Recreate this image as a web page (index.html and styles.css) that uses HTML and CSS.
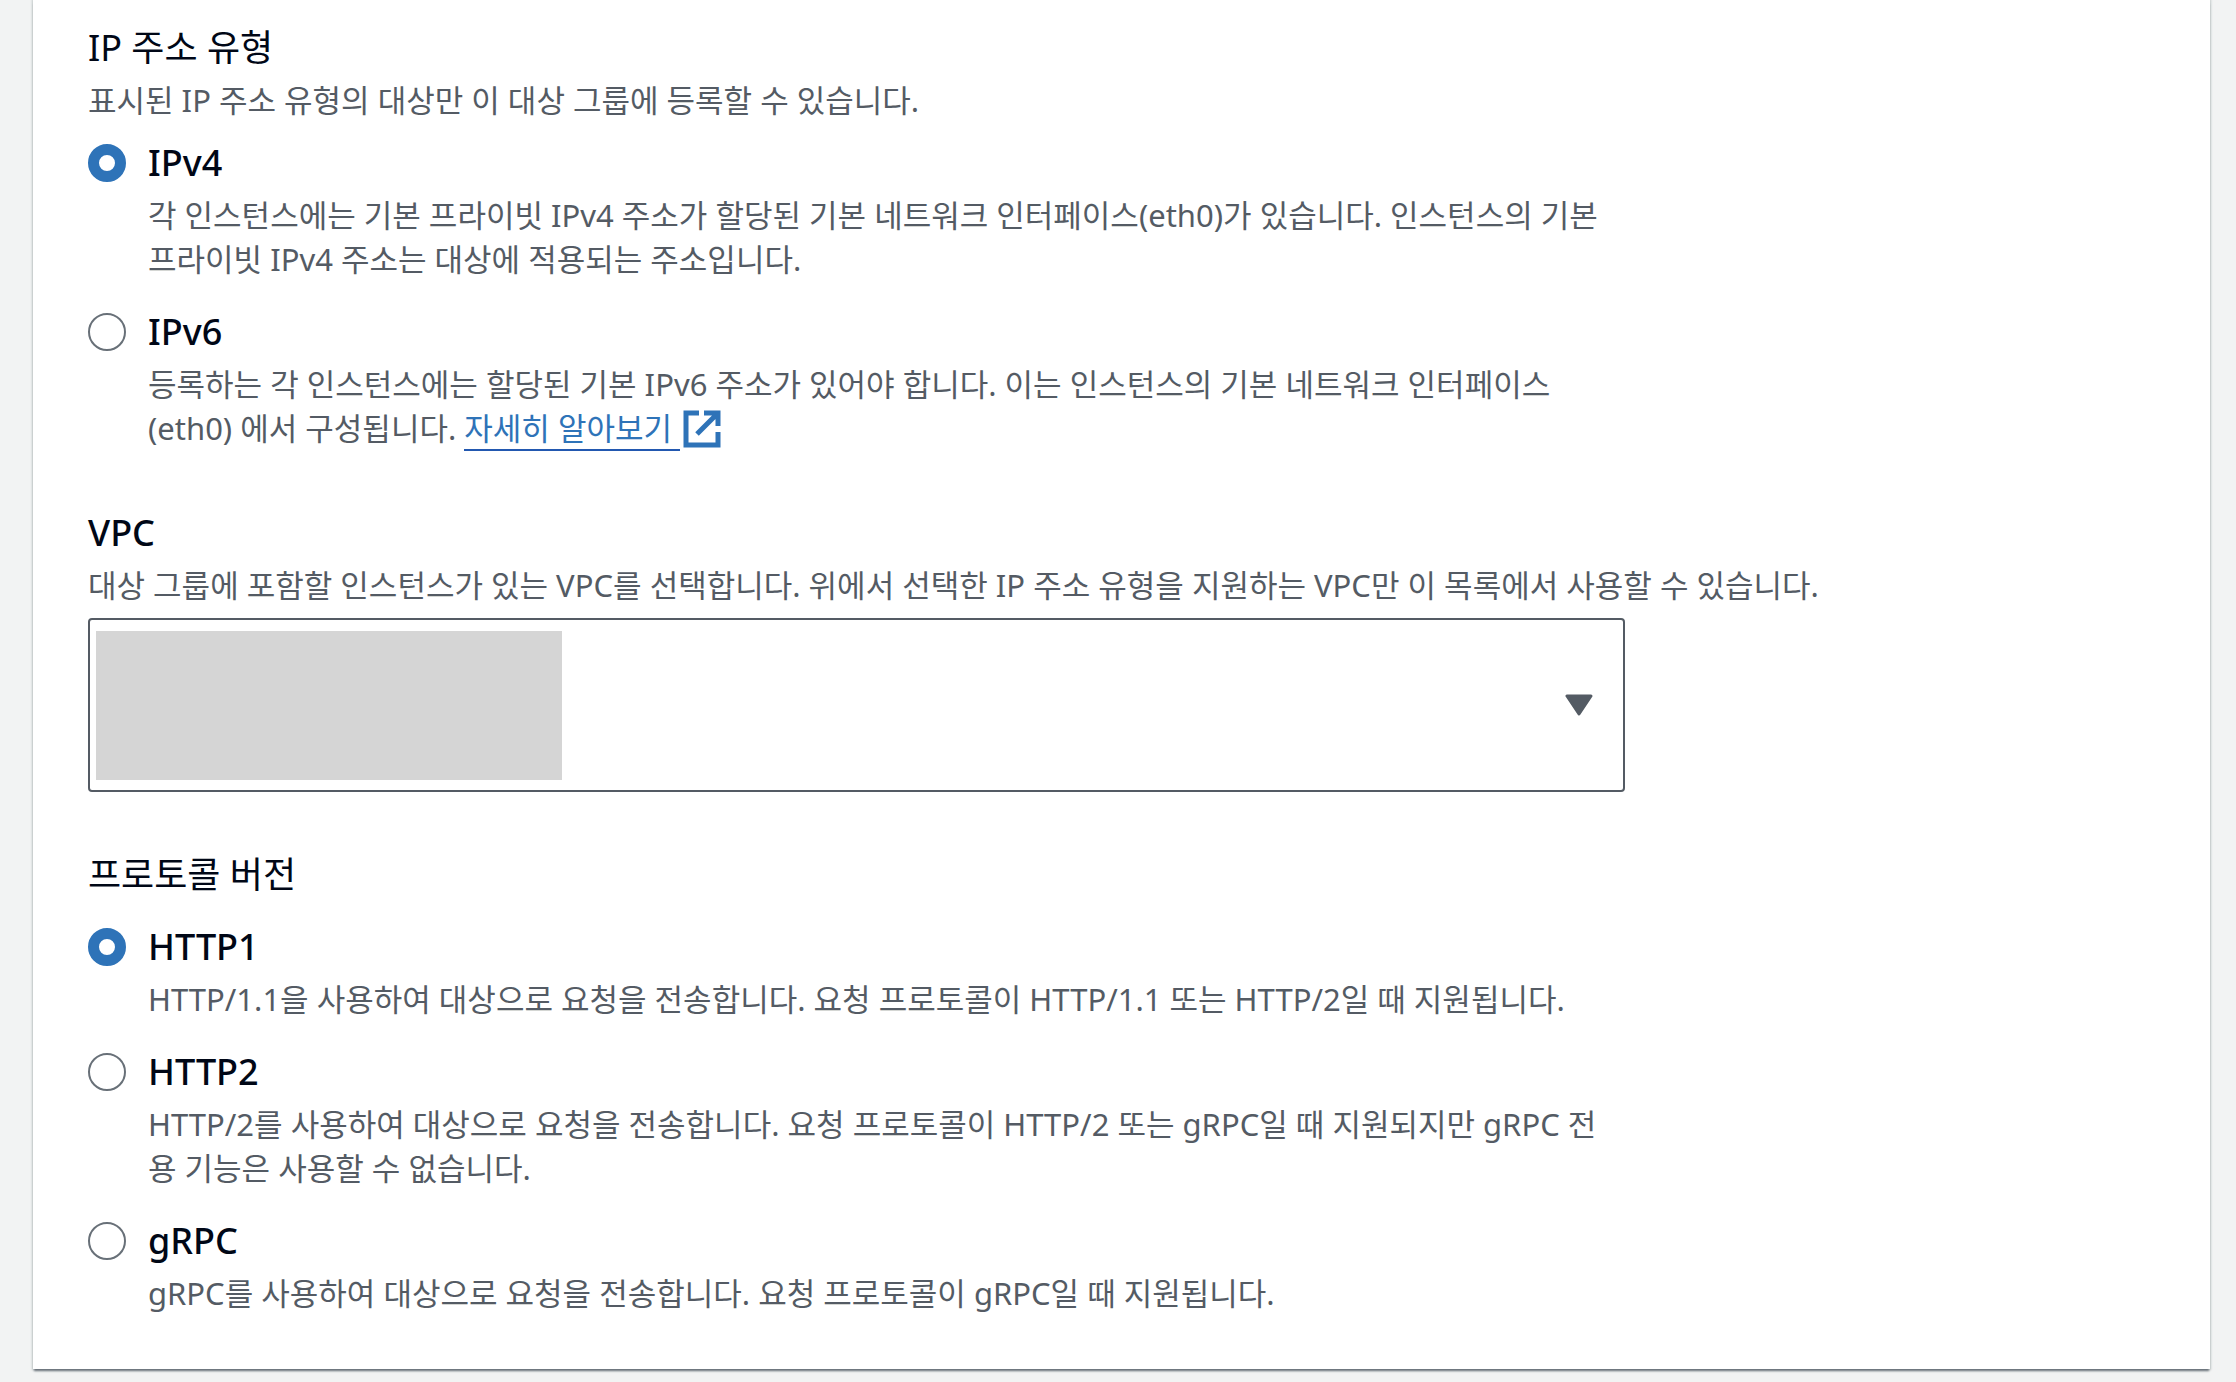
FILE: index.html
```html
<!DOCTYPE html>
<html lang="ko">
  <head>
    <meta charset="UTF-8" />
    <meta name="viewport" content="width=device-width, initial-scale=1.0" />
    <title>대상 그룹 생성</title>
    <link rel="stylesheet" href="styles.css">
  </head>
  <body>
    <form class="panel">
      <fieldset class="field" aria-describedby="ipTypeHint">
        <legend>IP 주소 유형</legend>
        <p class="description" id="ipTypeHint">표시된 IP 주소 유형의 대상만 이 대상 그룹에 등록할 수 있습니다.</p>
        <div class="options">
          <div class="option">
            <input type="radio" name="ipType" id="ipv4" checked />
            <div>
              <label for="ipv4">IPv4</label>
              <p class="description">
                각 인스턴스에는 기본 프라이빗 IPv4 주소가 할당된 기본 네트워크 인터페이스(eth0)가 있습니다. 인스턴스의 기본<br />
                프라이빗 IPv4 주소는 대상에 적용되는 주소입니다.
              </p>
            </div>
          </div>
          <div class="option">
            <input type="radio" name="ipType" id="ipv6" />
            <div>
              <label for="ipv6">IPv6</label>
              <p class="description">
                등록하는 각 인스턴스에는 할당된 기본 IPv6 주소가 있어야 합니다. 이는 인스턴스의 기본 네트워크 인터페이스<br />
                (eth0) 에서 구성됩니다.
                <a href="#"><span class="link-text">자세히 알아보기&nbsp;</span><svg class="external" viewBox="0 0 38 38" aria-hidden="true">
                    <path d="M16 3H3V35H35V22M21 3H35V16M34 4L14 24" />
                  </svg></a>
              </p>
            </div>
          </div>
        </div>
      </fieldset>

      <div class="field">
        <label for="vpc">VPC</label>
        <p class="description">대상 그룹에 포함할 인스턴스가 있는 VPC를 선택합니다. 위에서 선택한 IP 주소 유형을 지원하는 VPC만 이 목록에서 사용할 수 있습니다.</p>
        <div class="select">
          <select id="vpc">
            <option value=""></option>
          </select>
          <span class="mask"></span>
          <svg class="caret" viewBox="0 0 28 22" aria-hidden="true">
            <path d="M2 2H26L14 20Z" />
          </svg>
        </div>
      </div>

      <fieldset class="field protocol">
        <legend>프로토콜 버전</legend>
        <div class="options">
          <div class="option">
            <input type="radio" name="protocol" id="http1" checked />
            <div>
              <label for="http1">HTTP1</label>
              <p class="description">HTTP/1.1을 사용하여 대상으로 요청을 전송합니다. 요청 프로토콜이 HTTP/1.1 또는 HTTP/2일 때 지원됩니다.</p>
            </div>
          </div>
          <div class="option">
            <input type="radio" name="protocol" id="http2" />
            <div>
              <label for="http2">HTTP2</label>
              <p class="description">
                HTTP/2를 사용하여 대상으로 요청을 전송합니다. 요청 프로토콜이 HTTP/2 또는 gRPC일 때 지원되지만 gRPC 전<br />용 기능은 사용할 수 없습니다.
              </p>
            </div>
          </div>
          <div class="option">
            <input type="radio" name="protocol" id="grpc" />
            <div>
              <label for="grpc">gRPC</label>
              <p class="description">gRPC를 사용하여 대상으로 요청을 전송합니다. 요청 프로토콜이 gRPC일 때 지원됩니다.</p>
            </div>
          </div>
        </div>
      </fieldset>
    </form>
  </body>
</html>
```
FILE: styles.css
```css
* {
  margin: 0;
  padding: 0;
  box-sizing: border-box;
}
body {
  padding: 0 26px 13px 33px;
  font-family: "Noto Sans Medium", "Noto Sans", "Noto Sans CJK KR", sans-serif;
  background: #f2f3f3;
  color: #000716;
}
.panel {
  padding: 24px 55px 54px;
  background: #ffffff;
  box-shadow: 0 3px 2px -1px #687078, 0 0 2px 1px #c5cccc;
}
.field {
  border: none;
}
.field + .field {
  margin-top: 59px;
}
legend,
label {
  display: block;
  font-size: 36px;
  line-height: 48px;
}
label {
  font-weight: 500;
}
.description {
  margin-top: 6px;
  font-size: 31px;
  line-height: 44px;
  color: #545b64;
}
.options {
  display: flex;
  flex-direction: column;
  gap: 27px;
  margin-top: 17px;
}
.protocol .options {
  margin-top: 24px;
}
.option {
  display: flex;
  align-items: flex-start;
  gap: 22px;
}
input[type="radio"] {
  appearance: none;
  flex: none;
  width: 38px;
  height: 38px;
  margin-top: 5px;
  background: #ffffff;
  border: 2px solid #687078;
  border-radius: 50%;
}
input[type="radio"]:checked {
  border: 11px solid #2e73b8;
}
a {
  color: #2e73b8;
  text-decoration: none;
}
.link-text {
  border-bottom: 2px solid #2258b0;
}
.external {
  width: 38px;
  height: 38px;
  margin-left: 3px;
  vertical-align: -8px;
  fill: none;
  stroke: #2e73b8;
  stroke-width: 5;
}
.select {
  position: relative;
  width: calc(75% - 13px);
  margin-top: 11px;
}
select {
  appearance: none;
  display: block;
  width: 100%;
  height: 174px;
  background: #ffffff;
  border: 2px solid #545b64;
  border-radius: 4px;
  font: inherit;
}
.mask {
  position: absolute;
  top: 13px;
  left: 8px;
  width: 466px;
  height: 149px;
  background: #d5d5d5;
}
.caret {
  position: absolute;
  top: 76px;
  right: 32px;
  width: 28px;
  height: 22px;
  fill: #545b64;
  stroke: #545b64;
  stroke-width: 3;
  stroke-linejoin: round;
}
```
